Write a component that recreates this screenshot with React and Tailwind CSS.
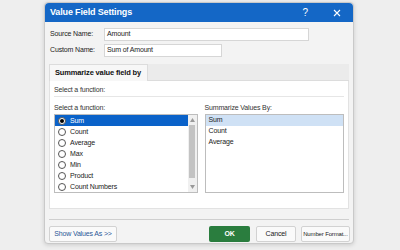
import React from 'react';

const functions = ['Sum', 'Count', 'Average', 'Max', 'Min', 'Product', 'Count Numbers'];
const summarizeBy = ['Sum', 'Count', 'Average'];

const Radio = ({ checked }) => (
  <span className="w-[8px] h-[8px] rounded-full border border-[#555] bg-white flex items-center justify-center shrink-0">
    {checked && <span className="w-[4px] h-[4px] rounded-full bg-black"></span>}
  </span>
);

const App = () => {
  return (
    <div
      className="w-[400px] h-[250px] bg-[#eeeeee] pt-[2px] pl-[44px] overflow-hidden whitespace-nowrap tracking-[-0.15px]"
      style={{ fontFamily: '"Liberation Sans", Arial, sans-serif' }}
    >
      <div className="w-[310px] h-[242px] bg-[#f3f3f3] rounded-[4px] border border-[#c9c9c9] shadow-[0_1px_4px_rgba(0,0,0,0.15)] flex flex-col">
        {/* title bar */}
        <div className="h-[19px] bg-[#1467c6] rounded-t-[4px] flex items-center pl-[5px] pr-[12px] text-white">
          <span className="text-[9px] font-bold leading-none">Value Field Settings</span>
          <span className="ml-auto text-[10px] leading-none mr-[25px]">?</span>
          <svg width="8" height="8" viewBox="0 0 8 8">
            <path d="M1 1L7 7M7 1L1 7" stroke="white" strokeWidth="1.1" />
          </svg>
        </div>

        <div className="flex-1 flex flex-col px-[4px]">
          {/* names */}
          <div className="mt-[6px] flex items-center h-[13px]">
            <span className="w-[55px] pl-[1px] text-[7px] text-[#222]">Source Name:</span>
            <div className="w-[205px] h-[13px] bg-white border border-[#d6d6d6] flex items-center pl-[2px] text-[7px] text-[#222]">Amount</div>
          </div>
          <div className="mt-[3px] flex items-center h-[13px]">
            <span className="w-[55px] pl-[1px] text-[7px] text-[#222]">Custom Name:</span>
            <div className="w-[118px] h-[13px] bg-white border border-[#d6d6d6] flex items-center pl-[2px] text-[7px] text-[#222]">Sum of Amount</div>
          </div>

          {/* tab */}
          <div className="mt-[7px] w-[300px]">
            <div className="flex h-[17px]">
              <div className="w-[99px] bg-[#f7f7f7] border border-b-0 border-[#dcdcdc] flex items-center pl-[5px] text-[7.5px] font-bold text-[#111]">
                Summarize value field by
              </div>
              <div className="flex-1 bg-[#ebebeb] border-b border-[#dcdcdc]"></div>
            </div>
            <div className="h-[128px] bg-white border border-t-0 border-[#e2e2e2] px-[4px]">
              <div className="h-[12px] flex items-end text-[7px] text-[#333] leading-none">Select a function:</div>
              <div className="mt-[3px] h-px bg-[#e6e6e6]"></div>
              <div className="flex gap-[7px] mt-[7px]">
                <div className="w-[144px]">
                  <div className="text-[7px] text-[#333] leading-none h-[10px]">Select a function:</div>
                  <div className="h-[79px] border border-[#bdbdbd] flex">
                    <div className="flex-1 flex flex-col">
                      {functions.map((f, i) => (
                        <div
                          key={f}
                          className={`h-[11px] flex items-center gap-[4px] pl-[3px] text-[7px] ${i === 0 ? 'bg-[#0a62c9] text-white' : 'text-[#222]'}`}
                        >
                          <Radio checked={i === 0} />
                          <span className="leading-none">{f}</span>
                        </div>
                      ))}
                    </div>
                    <div className="w-[9px] bg-[#f0f0f0] flex flex-col items-center">
                      <svg width="5" height="4" viewBox="0 0 5 4" className="mt-[3px]">
                        <path d="M0 4L2.5 0L5 4Z" fill="#9a9a9a" />
                      </svg>
                      <div className="mt-[3px] w-[6px] h-[53px] bg-[#c3c3c3]"></div>
                      <svg width="5" height="4" viewBox="0 0 5 4" className="mt-auto mb-[3px]">
                        <path d="M0 0L2.5 4L5 0Z" fill="#9a9a9a" />
                      </svg>
                    </div>
                  </div>
                </div>
                <div className="w-[140px]">
                  <div className="text-[7px] text-[#333] leading-none h-[10px]">Summarize Values By:</div>
                  <div className="h-[79px] border border-[#bdbdbd] flex flex-col">
                    {summarizeBy.map((s, i) => (
                      <div
                        key={s}
                        className={`h-[11px] flex items-center pl-[3px] text-[7px] text-[#222] ${i === 0 ? 'bg-[#cfe1f5]' : ''}`}
                      >
                        {s}
                      </div>
                    ))}
                  </div>
                </div>
              </div>
            </div>
          </div>

          <div className="mt-[10px] w-[300px] h-px bg-[#cfcfcf]"></div>

          {/* buttons */}
          <div className="mt-[6px] flex items-center w-[301px]">
            <div className="w-[68px] h-[16px] bg-[#fafafa] border border-[#d2d2d2] rounded-[2px] flex items-center justify-center text-[7px] text-[#2b5797]">
              Show Values As &gt;&gt;
            </div>
            <div className="ml-auto w-[41px] h-[16px] bg-[#2a7d3e] rounded-[2px] flex items-center justify-center text-[7px] font-bold text-white">
              OK
            </div>
            <div className="ml-[6px] w-[40px] h-[16px] bg-[#fafafa] border border-[#d2d2d2] rounded-[2px] flex items-center justify-center text-[7px] text-[#222]">
              Cancel
            </div>
            <div className="ml-[5px] w-[49px] h-[16px] bg-[#fafafa] border border-[#d2d2d2] rounded-[2px] flex items-center justify-center text-[6px] text-[#222] overflow-hidden">
              Number Format...
            </div>
          </div>
        </div>
      </div>
    </div>
  );
};

export default App;
